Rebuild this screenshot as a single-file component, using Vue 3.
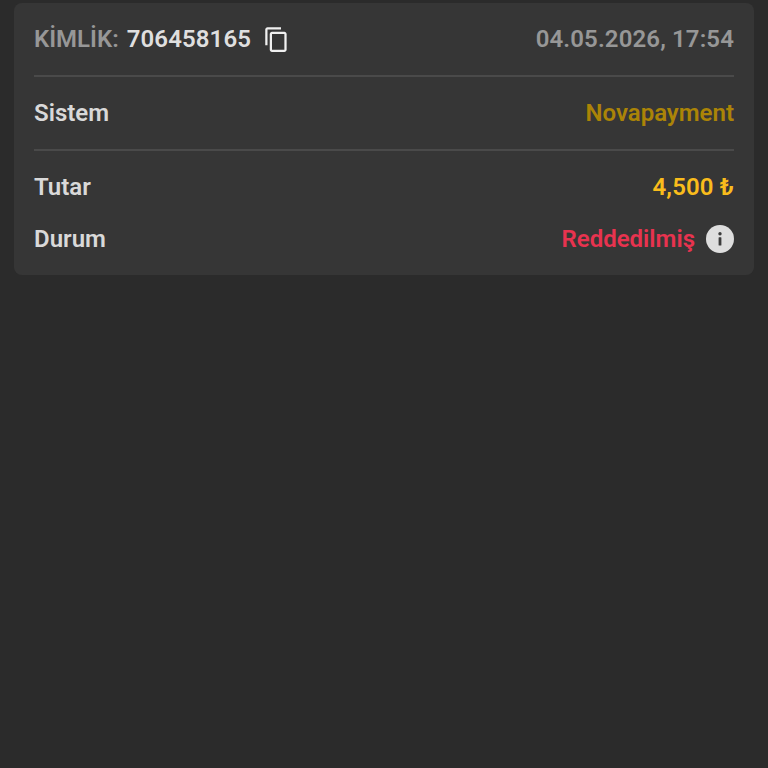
<template>
  <div class="page">
    <section class="card">
      <div class="row top">
        <div class="id">
          <span class="id-label">KİMLİK:</span>
          <span class="id-value">706458165</span>
          <svg class="copy" viewBox="0 0 24 24" width="27" height="27" fill="#f0f0f0">
            <path d="M16 1H4c-1.1 0-2 .9-2 2v14h2V3h12V1zm3 4H8c-1.1 0-2 .9-2 2v14c0 1.1.9 2 2 2h11c1.1 0 2-.9 2-2V7c0-1.1-.9-2-2-2zm0 16H8V7h11v14z" />
          </svg>
        </div>
        <span class="date">04.05.2026, 17:54</span>
      </div>
      <hr class="divider" />
      <div class="row system">
        <span class="label">Sistem</span>
        <span class="provider">Novapayment</span>
      </div>
      <hr class="divider" />
      <div class="row amount">
        <span class="label">Tutar</span>
        <span class="sum">{{ amount }} ₺</span>
      </div>
      <div class="row status">
        <span class="label">Durum</span>
        <div class="status-value">
          <span class="rejected">Reddedilmiş</span>
          <svg class="info" viewBox="0 0 28 28" width="28" height="28">
            <circle cx="14" cy="14" r="14" fill="#dedede" />
            <circle cx="14" cy="8.8" r="1.7" fill="#3c3c3c" />
            <rect x="12.6" y="12.2" width="2.8" height="8.4" rx="0.5" fill="#3c3c3c" />
          </svg>
        </div>
      </div>
    </section>
  </div>
</template>

<script setup>
const amount = '4,500'
</script>

<style>
body {
  background: #2b2b2b;
}
</style>

<style scoped>
.page {
  box-sizing: border-box;
  height: 768px;
  padding: 3px 14px 0;
  background: #2b2b2b;
  font-family: Roboto, "Liberation Sans", sans-serif;
  font-size: 24px;
  font-weight: 600;
}

.card {
  box-sizing: border-box;
  height: 272px;
  padding: 0 20px;
  background: #363636;
  border-radius: 8px;
}

.row {
  display: flex;
  justify-content: space-between;
  align-items: center;
}

.top {
  height: 72px;
}

.system {
  height: 72px;
}

.amount {
  height: 72px;
}

.status {
  height: 32px;
}

.id {
  display: flex;
  align-items: center;
}

.id-label {
  color: #979797;
}

.id-value {
  margin-left: 8px;
  color: #dfdfdf;
  letter-spacing: 0.1px;
}

.copy {
  margin-left: 12px;
}

.date {
  color: #979797;
  letter-spacing: 0.12px;
}

.divider {
  margin: 0;
  height: 2px;
  border: 0;
  background: #4a4a4a;
}

.label {
  color: #d9d9d9;
}

.provider {
  color: #ab8407;
}

.sum {
  color: #f9bc1c;
  letter-spacing: 0.15px;
}

.status-value {
  display: flex;
  align-items: center;
  gap: 11px;
}

.rejected {
  color: #e8334f;
}
</style>
